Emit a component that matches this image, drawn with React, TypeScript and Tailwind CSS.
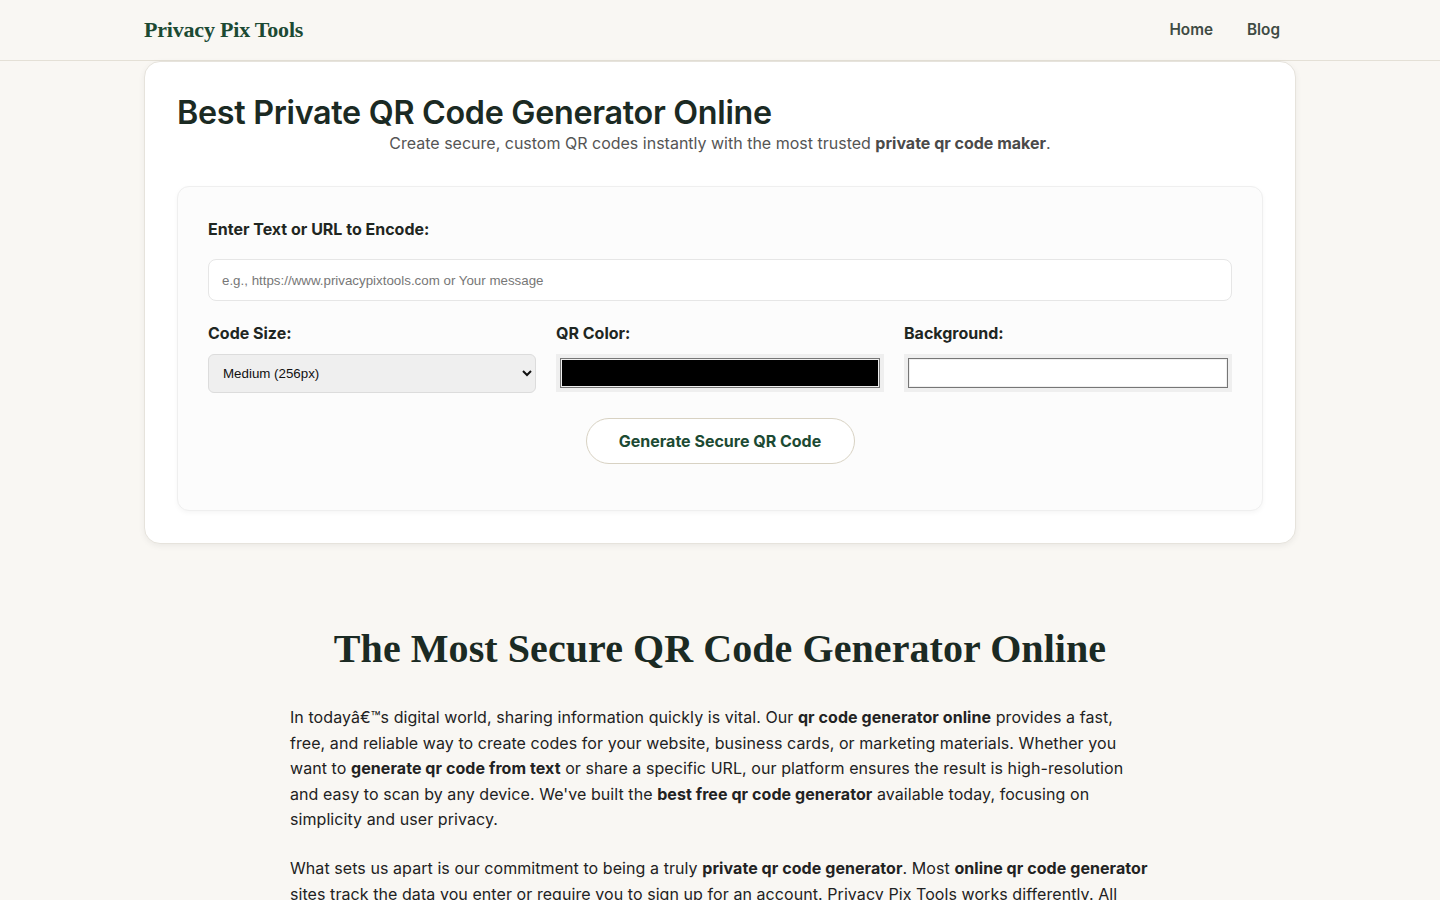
import React, { useState } from "react";

const inter = { fontFamily: "Inter, 'Noto Sans', sans-serif" };
const arial = { fontFamily: "'Liberation Sans', Arial, sans-serif" };

function Header() {
  return (
    <header className="h-[61px] border-b border-[#e4e0d6] bg-[#f9f7f3]">
      <div className="mx-auto flex h-[59px] max-w-[1152px] items-center justify-between">
        <a className="text-[22px] font-bold tracking-[-0.2px] text-[#1c4a33]" style={{ fontFamily: "'Liberation Serif', serif" }}>
          Privacy Pix Tools
        </a>
        <nav className="flex items-center gap-[34px] pr-[16px] pt-[2px] text-[15.3px] font-semibold text-[#3f4b43]" style={inter}>
          <a>Home</a>
          <a>Blog</a>
        </nav>
      </div>
    </header>
  );
}

function ColorField({ value, onChange }: { value: string; onChange: (v: string) => void }) {
  return (
    <div className="mt-[10px] bg-[#efefef] p-[4px]">
      <div className="h-[30px] border border-[#767676] p-[1px]">
        <input type="color" value={value} onChange={(e) => onChange(e.target.value)} className="sr-only" />
        <div className="h-full w-full" style={{ background: value }} />
      </div>
    </div>
  );
}

function Generator() {
  const [text, setText] = useState("");
  const [size, setSize] = useState("256");
  const [fg, setFg] = useState("#000000");
  const [bg, setBg] = useState("#ffffff");
  return (
    <section className="mx-auto max-w-[1152px] rounded-[16px] border border-[#e6e3dc] bg-white px-[32px] pb-[32px] pt-[31px] shadow-[0_2px_6px_rgba(0,0,0,0.06)]">
      <h1 className="text-[32.3px] font-semibold leading-[40px] tracking-[-0.3px] text-[#1b2a23]">
        Best Private QR Code Generator Online
      </h1>
      <p className="-mt-[1px] text-center text-[16px] leading-[22px] text-[#555]">
        Create secure, custom QR codes instantly with the most trusted <strong className="font-bold text-[#4a4a4a]">private qr code maker</strong>.
      </p>

      <div className="mt-[32px] rounded-[12px] border border-[#efefef] bg-[#fcfcfc] px-[30px] pb-[46px] pt-[31px] shadow-[0_2px_5px_rgba(0,0,0,0.04)]">
        <label className="block text-[16px] font-bold leading-[22px] text-[#1f2622]">Enter Text or URL to Encode:</label>
        <input
          value={text}
          onChange={(e) => setText(e.target.value)}
          placeholder="e.g., https://www.privacypixtools.com or Your message"
          className="mt-[19px] block h-[42px] w-full rounded-[8px] border border-[#e6e6e6] bg-white px-[13px] text-[13.33px] text-[#333] placeholder:text-[#777] outline-none"
          style={arial}
        />

        <div className="mt-[21px] grid grid-cols-3 gap-[20px]">
          <div>
            <label className="block text-[16px] font-bold leading-[22px] text-[#1f2622]">Code Size:</label>
            <select
              value={size}
              onChange={(e) => setSize(e.target.value)}
              className="mt-[10px] block h-[39px] w-full rounded-[6px] border border-[#dcdcdc] bg-[#efefef] pl-[10px] pr-[8px] text-[13.33px] text-[#111]"
              style={arial}
            >
              <option value="128">Small (128px)</option>
              <option value="256">Medium (256px)</option>
              <option value="512">Large (512px)</option>
            </select>
          </div>
          <div>
            <label className="block text-[16px] font-bold leading-[22px] text-[#1f2622]">QR Color:</label>
            <ColorField value={fg} onChange={setFg} />
          </div>
          <div>
            <label className="block text-[16px] font-bold leading-[22px] text-[#1f2622]">Background:</label>
            <ColorField value={bg} onChange={setBg} />
          </div>
        </div>

        <div className="mt-[25px] flex justify-center">
          <button className="h-[46px] w-[269px] rounded-full border border-[#d8d2c3] bg-white text-[16px] font-bold text-[#1c4a33]">
            Generate Secure QR Code
          </button>
        </div>
      </div>
    </section>
  );
}

function Article() {
  return (
    <article className="mx-auto max-w-[860px] pt-[81px] text-[16px] leading-[25.6px] tracking-[0.07px] text-[#222]">
      <h2 className="text-center text-[40px] font-bold leading-[48px] text-[#1b2a23]" style={{ fontFamily: "'Liberation Serif', serif" }}>
        The Most Secure QR Code Generator Online
      </h2>
      <p className="mt-[32px]">
        In todayâ€™s digital world, sharing information quickly is vital. Our <strong className="font-bold">qr code generator online</strong> provides a fast, free, and reliable way to create codes for your website, business cards, or marketing materials. Whether you want to <strong className="font-bold">generate qr code from text</strong> or share a specific URL, our platform ensures the result is high-resolution and easy to scan by any device. We've built the <strong className="font-bold">best free qr code generator</strong> available today, focusing on simplicity and user privacy.
      </p>
      <p className="mt-[23px]">
        What sets us apart is our commitment to being a truly <strong className="font-bold">private qr code generator</strong>. Most <strong className="font-bold">online qr code generator</strong> sites track the data you enter or require you to sign up for an account. Privacy Pix Tools works differently. All codes are created right in your browser, so nothing you type is ever sent to a server or stored anywhere.
      </p>
    </article>
  );
}

export default function App() {
  return (
    <div className="min-h-screen bg-[#f9f7f3]" style={inter}>
      <Header />
      <main className="pb-[60px]">
        <Generator />
        <Article />
      </main>
    </div>
  );
}
